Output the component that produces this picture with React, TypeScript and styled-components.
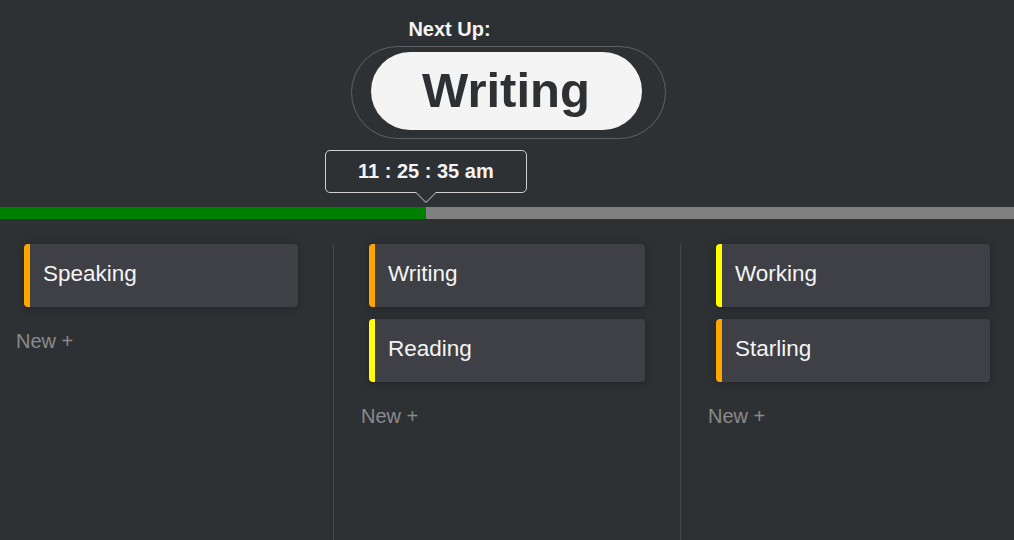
import React from "react";
import styled, { createGlobalStyle } from "styled-components";

const GlobalStyle = createGlobalStyle`
  html, body {
    margin: 0;
    padding: 0;
    background: #2e3134;
    overflow: hidden;
  }
  body {
    font-family: "Liberation Sans", Arial, Helvetica, sans-serif;
    color: #f2f2f2;
  }
  * { box-sizing: border-box; }
`;

const Page = styled.div`
  width: 1014px;
  height: 540px;
  background: #2e3134;
  display: flex;
  flex-direction: column;
`;

const Header = styled.header`
  display: flex;
  flex-direction: column;
  align-items: center;
  padding-top: 18px;
  padding-left: 3px;
`;

const NextLabel = styled.div`
  font-size: 20px;
  font-weight: 700;
  line-height: 23px;
  color: #f4f4f4;
  margin-right: 118px;
`;

const PillFrame = styled.div`
  margin-top: 5px;
  border: 1px solid #5f6265;
  border-radius: 47px;
  padding: 5px 23px 8px 19px;
`;

const Pill = styled.div`
  height: 78px;
  padding: 0 52px 0 51px;
  border-radius: 39px;
  background: #f4f4f4;
  color: #2e3134;
  font-size: 49px;
  font-weight: 700;
  line-height: 76px;
  text-align: center;
`;

const ProgressArea = styled.div`
  position: relative;
  margin-top: 68px;
`;

const Track = styled.div`
  height: 12px;
  background: #808080;
  display: flex;
`;

const Fill = styled.div`
  height: 100%;
  background: #008000;
`;

const TimeTip = styled.div`
  position: absolute;
  bottom: calc(100% + 3px);
  transform: translateX(-50%);
  width: 202px;
  height: 43px;
  border: 1px solid #cfcfcf;
  border-radius: 5px;
  background: #2e3134;
  display: flex;
  align-items: center;
  justify-content: center;
  font-size: 20px;
  font-weight: 700;
  color: #f4f4f4;
  margin-bottom: 11px;

  &::before,
  &::after {
    content: "";
    position: absolute;
    left: 50%;
    transform: translateX(-50%);
    border-style: solid;
    border-color: transparent;
  }
  &::before {
    top: 100%;
    border-width: 11px 11px 0 11px;
    border-top-color: #cfcfcf;
  }
  &::after {
    top: 100%;
    border-width: 10px 10px 0 10px;
    border-top-color: #2e3134;
  }
`;

const Board = styled.main`
  flex: 1;
  display: grid;
  grid-template-columns: 333px 347px 1fr;
  margin-top: 25px;
`;

const Column = styled.section<{ $first?: boolean }>`
  display: flex;
  flex-direction: column;
  align-items: flex-start;
  gap: 12px;
  padding-left: ${(p) => (p.$first ? "24px" : "35px")};
  border-left: ${(p) => (p.$first ? "none" : "1px solid #45484b")};
`;

const Card = styled.div<{ $accent: string; $wide?: boolean }>`
  width: ${(p) => (p.$wide ? "276px" : "274px")};
  height: 63px;
  background: #3e4045;
  border-left: 6px solid ${(p) => p.$accent};
  border-radius: 4px;
  box-shadow: 0 1px 8px rgba(0, 0, 0, 0.28);
  display: flex;
  align-items: center;
  padding: 0 14px 3px 13px;
  font-size: 22.5px;
  color: #f4f4f4;
`;

const NewButton = styled.div`
  margin-top: 11px;
  margin-left: -8px;
  font-size: 20px;
  line-height: 23px;
  color: #8a8a8a;
`;

const ORANGE = "#ffa500";
const YELLOW = "#ffff00";

const columns = [
  [{ name: "Speaking", color: ORANGE }],
  [
    { name: "Writing", color: ORANGE },
    { name: "Reading", color: YELLOW },
  ],
  [
    { name: "Working", color: YELLOW },
    { name: "Starling", color: ORANGE },
  ],
];

export default function App() {
  const progress = 42;
  return (
    <Page>
      <GlobalStyle />
      <Header>
        <NextLabel>Next Up:</NextLabel>
        <PillFrame>
          <Pill>Writing</Pill>
        </PillFrame>
      </Header>
      <ProgressArea>
        <TimeTip style={{ left: `${progress}%` }}>11 : 25 : 35 am</TimeTip>
        <Track>
          <Fill style={{ width: `${progress}%` }} />
        </Track>
      </ProgressArea>
      <Board>
        {columns.map((col, i) => (
          <Column key={i} $first={i === 0}>
            {col.map((c) => (
              <Card key={c.name} $accent={c.color} $wide={i === 1}>
                {c.name}
              </Card>
            ))}
            <NewButton>New +</NewButton>
          </Column>
        ))}
      </Board>
    </Page>
  );
}
